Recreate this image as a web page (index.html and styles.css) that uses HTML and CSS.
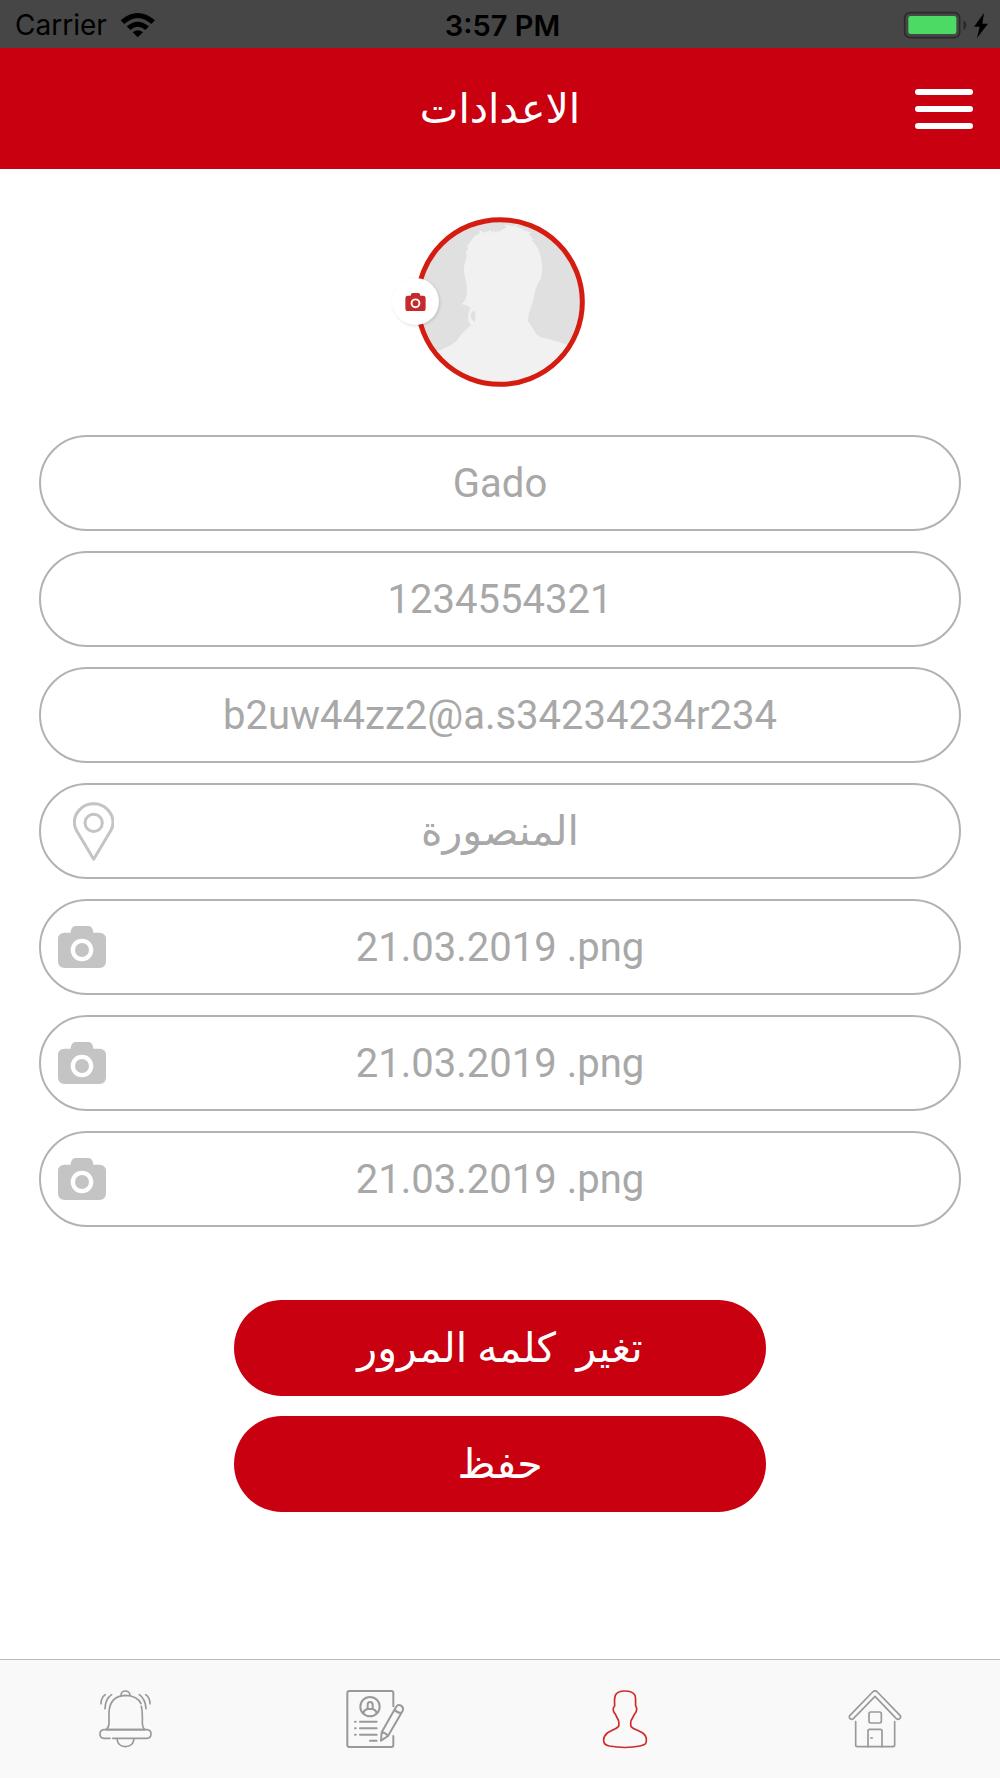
FILE: index.html
```
<!DOCTYPE html>
<html lang="ar" dir="rtl">
<head>
    <meta charset="UTF-8">
    <meta name="viewport" content="width=device-width, initial-scale=1.0">
    <title>الاعدادات</title>
    <link rel="stylesheet" href="styles.css">
</head>
<body>
    <svg class="sprite" aria-hidden="true">
        <symbol id="camera" viewBox="0 0 144 126">
            <path fill="currentColor" fill-rule="evenodd" d="M20 20H38C39 7 44 0 54 0H90C100 0 105 7 106 20H124Q144 20 144 40V106Q144 126 124 126H20Q0 126 0 106V40Q0 20 20 20ZM72 38A34 34 0 1 0 72 106A34 34 0 1 0 72 38ZM72 51A21 21 0 1 1 72 93A21 21 0 1 1 72 51Z"/>
        </symbol>
    </svg>

    <div class="status-bar" dir="ltr">
        <div class="carrier">
            <span>Carrier</span>
            <svg class="wifi" viewBox="360 33 105 78" aria-hidden="true">
                <path d="M362 58Q413 14 465 58L454 69Q413 33 373 69Z"/>
                <path d="M380 76Q413 48 447 76L436 87Q413 68 391 87Z"/>
                <path d="M398 94Q413 81 429 94L413 109Z"/>
            </svg>
        </div>
        <div class="clock">3:57 PM</div>
        <svg class="battery" viewBox="1208 30 261 87" aria-hidden="true">
            <rect x="1213" y="35" width="165" height="75" rx="16" fill="none" stroke="#2a2a2a" stroke-width="5"/>
            <rect x="1224" y="45" width="144" height="54" rx="7" fill="#4cd964"/>
            <path d="M1389 58Q1398 63 1398 73Q1398 83 1389 88Z" fill="#2a2a2a"/>
            <path d="M1451 36L1421 77H1438L1430 111L1463 68H1446Z"/>
        </svg>
    </div>

    <header class="header">
        <button class="menu-btn" type="button" aria-label="القائمة">
            <span></span>
            <span></span>
            <span></span>
        </button>
        <h1>الاعدادات</h1>
    </header>

    <main class="content">
        <div class="avatar">
            <svg class="photo" viewBox="135 51 510 510" role="img" aria-label="الصورة الشخصية">
                <defs>
                    <clipPath id="round"><circle cx="390" cy="306" r="247"/></clipPath>
                </defs>
                <circle cx="390" cy="306" r="247" fill="#e0e0e0"/>
                <g clip-path="url(#round)">
                    <path fill="#f1f1f1" d="M135 480Q175 463 205 452Q245 438 262 420Q280 392 304 375Q294 368 294 350Q296 332 302 324L288 315L274 313Q287 303 290 285Q293 262 287 240Q280 217 282 200L290 168L288 154L296 144L290 141L303 122Q312 107 330 98L328 90L343 98L362 91L366 98L373 90L375 99L383 91L382 97L410 82L404 74L430 79L442 70L438 80L464 87L456 90L484 97L476 102L491 121L484 120Q504 140 510 162Q516 176 516 210Q516 238 503 252Q494 270 491 296Q483 320 477 340Q474 357 474 364Q486 380 495 396Q502 410 520 413Q550 420 590 434L650 460V570H135Z"/>
                    <path fill="#e0e0e0" d="M313 331Q302 336 302 350Q305 362 314 366Q319 349 313 331Z"/>
                </g>
                <circle cx="390" cy="306" r="247" fill="none" stroke="#d51c10" stroke-width="15"/>
            </svg>
            <button class="avatar-btn" type="button" aria-label="تغيير الصورة">
                <svg viewBox="0 0 144 126"><use href="#camera"/></svg>
            </button>
        </div>

        <form class="settings">
            <div class="field">
                <input type="text" value="Gado" dir="auto" aria-label="الاسم">
            </div>
            <div class="field">
                <input type="tel" value="1234554321" dir="ltr" aria-label="رقم الجوال">
            </div>
            <div class="field">
                <input type="text" value="b2uw44zz2@a.s34234234r234" dir="ltr" aria-label="البريد الالكتروني">
            </div>
            <div class="field with-icon">
                <input class="city" type="text" value="المنصورة" aria-label="المدينة">
                <button class="field-btn pin-btn" type="button" aria-label="تحديد الموقع">
                    <svg class="pin" viewBox="159 95 123 176">
                        <path d="M221 266L170 181Q163 169 163 156A58 56 0 0 1 279 156Q279 169 272 181Z"/>
                        <circle cx="221" cy="157" r="26"/>
                    </svg>
                </button>
            </div>
            <div class="field with-icon">
                <input type="text" value="21.03.2019 .png" dir="ltr" aria-label="الصورة الاولى">
                <button class="field-btn" type="button" aria-label="رفع الصورة الاولى">
                    <svg class="camera" viewBox="0 0 144 126"><use href="#camera"/></svg>
                </button>
            </div>
            <div class="field with-icon">
                <input type="text" value="21.03.2019 .png" dir="ltr" aria-label="الصورة الثانية">
                <button class="field-btn" type="button" aria-label="رفع الصورة الثانية">
                    <svg class="camera" viewBox="0 0 144 126"><use href="#camera"/></svg>
                </button>
            </div>
            <div class="field with-icon">
                <input type="text" value="21.03.2019 .png" dir="ltr" aria-label="الصورة الثالثة">
                <button class="field-btn" type="button" aria-label="رفع الصورة الثالثة">
                    <svg class="camera" viewBox="0 0 144 126"><use href="#camera"/></svg>
                </button>
            </div>

            <div class="actions">
                <button class="btn" type="button">تغير&nbsp; كلمه المرور</button>
                <button class="btn" type="submit">حفظ</button>
            </div>
        </form>
    </main>

    <nav class="tab-bar">
        <a href="#home" aria-label="الرئيسية">
            <svg viewBox="825 149 180 180">
                <path d="M840 228L908 158Q915 151 922 158L990 228Q994 234 989 238Q984 242 979 238L915 171L850 238Q845 242 840 238Q836 234 840 228Z"/>
                <path d="M857 247V317Q857 322 862 322H969Q974 322 974 317V247"/>
                <rect x="897" y="218" width="37" height="33" rx="5"/>
                <path d="M894 322V275Q894 270 899 270H931Q936 270 936 275V322M902 296H907"/>
            </svg>
        </a>
        <a class="active" href="#profile" aria-label="الحساب">
            <svg viewBox="75 149 180 180">
                <path d="M134 200C134 190 132 178 136 168C140 158 150 155 165 155C180 155 190 158 195 168C198 178 196 190 197 200C202 206 200 214 197 220C191 226 189 235 184 242C181 248 182 256 183 262C192 271 206 273 218 281C228 288 230 294 229 304C229 314 225 317 210 320C185 325 145 325 118 320C105 317 101 312 101 304C100 294 104 288 112 281C124 273 138 270 146 261C147 255 147 248 145 242C140 234 138 225 132 219C129 213 129 205 134 200Z"/>
            </svg>
        </a>
        <a href="#requests" aria-label="الطلبات">
            <svg class="bold" viewBox="825 149 180 180">
                <path d="M970 201V161Q970 155 964 155H838Q832 155 832 161V317Q832 323 838 323H964Q970 323 970 317V290"/>
                <circle cx="900" cy="202" r="29"/>
                <path d="M880 221Q883 210 893 209H907Q917 210 920 221M893 208V196Q893 188 900 188Q908 188 908 196V208"/>
                <path d="M870 247H920M870 267H920M870 286H920M900 304H920M855 247H857M855 267H857M855 286H857"/>
                <path d="M933 304L935 279L978 203Q984 194 993 199Q1002 205 998 214L954 290ZM935 279Q947 280 954 290M974 211Q980 220 993 221"/>
            </svg>
        </a>
        <a href="#notifications" aria-label="التنبيهات">
            <svg viewBox="75 149 180 180">
                <path d="M153 167Q154 155 166 155Q178 155 180 167M213 193Q202 169 166 168Q120 170 117 218V252Q117 264 109 271H224Q217 264 217 252Q218 218 214 201"/>
                <path d="M120 297H102Q90 296 90 284Q90 272 102 271H231Q243 272 243 284Q243 296 231 297H128M141 299Q144 322 166 322Q189 322 192 299"/>
                <path d="M93 193Q93 175 106 166M105 208Q106 178 125 166M240 193Q240 175 227 166M228 208Q226 178 208 166"/>
            </svg>
        </a>
    </nav>
</body>
</html>
```
FILE: styles.css
```
* {
    box-sizing: border-box;
}
body {
    margin: 0;
    min-height: 100vh;
    display: flex;
    flex-direction: column;
    background: #fff;
    font-family: Roboto, "DejaVu Sans", sans-serif;
}
button {
    border: none;
    padding: 0;
    background: none;
    font: inherit;
    cursor: pointer;
}
svg {
    display: block;
}
.sprite {
    position: absolute;
    width: 0;
    height: 0;
}

/* status bar */
.status-bar {
    display: grid;
    grid-template-columns: 1fr auto 1fr;
    align-items: center;
    height: 48px;
    padding: 2px 10px 0 15px;
    background: #464646;
    color: #000;
    font-family: Inter, sans-serif;
    font-size: 28px;
}
.carrier {
    display: flex;
    align-items: center;
    gap: 13px;
}
.wifi {
    width: 35px;
    height: 26px;
}
.clock {
    font-size: 29px;
    font-weight: 600;
}
.battery {
    width: 87px;
    height: 29px;
    justify-self: end;
}

/* header */
.header {
    display: grid;
    grid-template-columns: 1fr auto 1fr;
    align-items: center;
    height: 121px;
    padding: 0 27px;
    background: #c8000f;
    color: #fff;
}
.header h1 {
    margin: 0;
    font-size: 41px;
    font-weight: 400;
}
.menu-btn {
    display: flex;
    flex-direction: column;
    gap: 11px;
    width: 58px;
}
.menu-btn span {
    height: 6px;
    border-radius: 3px;
    background: #fff;
}

/* settings */
.content {
    flex: 1;
    padding: 48px 39px;
}
.avatar {
    position: relative;
    width: 170px;
    margin: 0 auto 48px;
}
.photo {
    width: 170px;
    height: 170px;
}
.avatar-btn {
    position: absolute;
    left: -23px;
    top: 61px;
    display: flex;
    align-items: center;
    justify-content: center;
    width: 47px;
    height: 47px;
    border-radius: 50%;
    background: #fff;
    box-shadow: 1px 1px 3px rgba(0,0,0,0.15);
    color: #c62a2c;
}
.avatar-btn svg {
    width: 21px;
    height: 18px;
}
.settings {
    display: flex;
    flex-direction: column;
    gap: 20px;
}
.field {
    display: flex;
    height: 96px;
    border: 2px solid #b2b2b2;
    border-radius: 48px;
}
.field input {
    flex: 1;
    min-width: 0;
    border: none;
    outline: none;
    padding: 0 32px;
    background: none;
    color: #a8a8a8;
    font: inherit;
    font-size: 40px;
    text-align: center;
}
.field .city {
    font-size: 41px;
}
.with-icon input {
    padding: 0 96px 0 0;
}
.field-btn {
    display: flex;
    align-items: center;
    justify-content: flex-end;
    width: 96px;
    padding-left: 17px;
    color: #c4c4c4;
}
.pin-btn {
    padding-left: 32px;
}
.camera {
    width: 48px;
    height: 42px;
}
.pin {
    width: 41px;
    height: 59px;
    fill: none;
    stroke: currentColor;
    stroke-width: 9;
    stroke-linejoin: round;
}
.actions {
    display: flex;
    flex-direction: column;
    gap: 20px;
    width: 100%;
    max-width: 532px;
    margin: 53px auto 0;
}
.btn {
    height: 96px;
    border-radius: 48px;
    background: #c8000f;
    color: #fff;
    font-size: 41px;
}

/* tab bar */
.tab-bar {
    display: grid;
    grid-template-columns: repeat(4, 1fr);
    align-items: center;
    height: 119px;
    border-top: 1px solid #bbb;
    background: #f9f9f9;
}
.tab-bar a {
    display: flex;
    justify-content: center;
    color: #999;
}
.tab-bar a.active {
    color: #cf2a2a;
}
.tab-bar svg {
    width: 60px;
    height: 60px;
    fill: none;
    stroke: currentColor;
    stroke-width: 5;
    stroke-linecap: round;
    stroke-linejoin: round;
}
.tab-bar .bold {
    stroke-width: 6;
}
```
